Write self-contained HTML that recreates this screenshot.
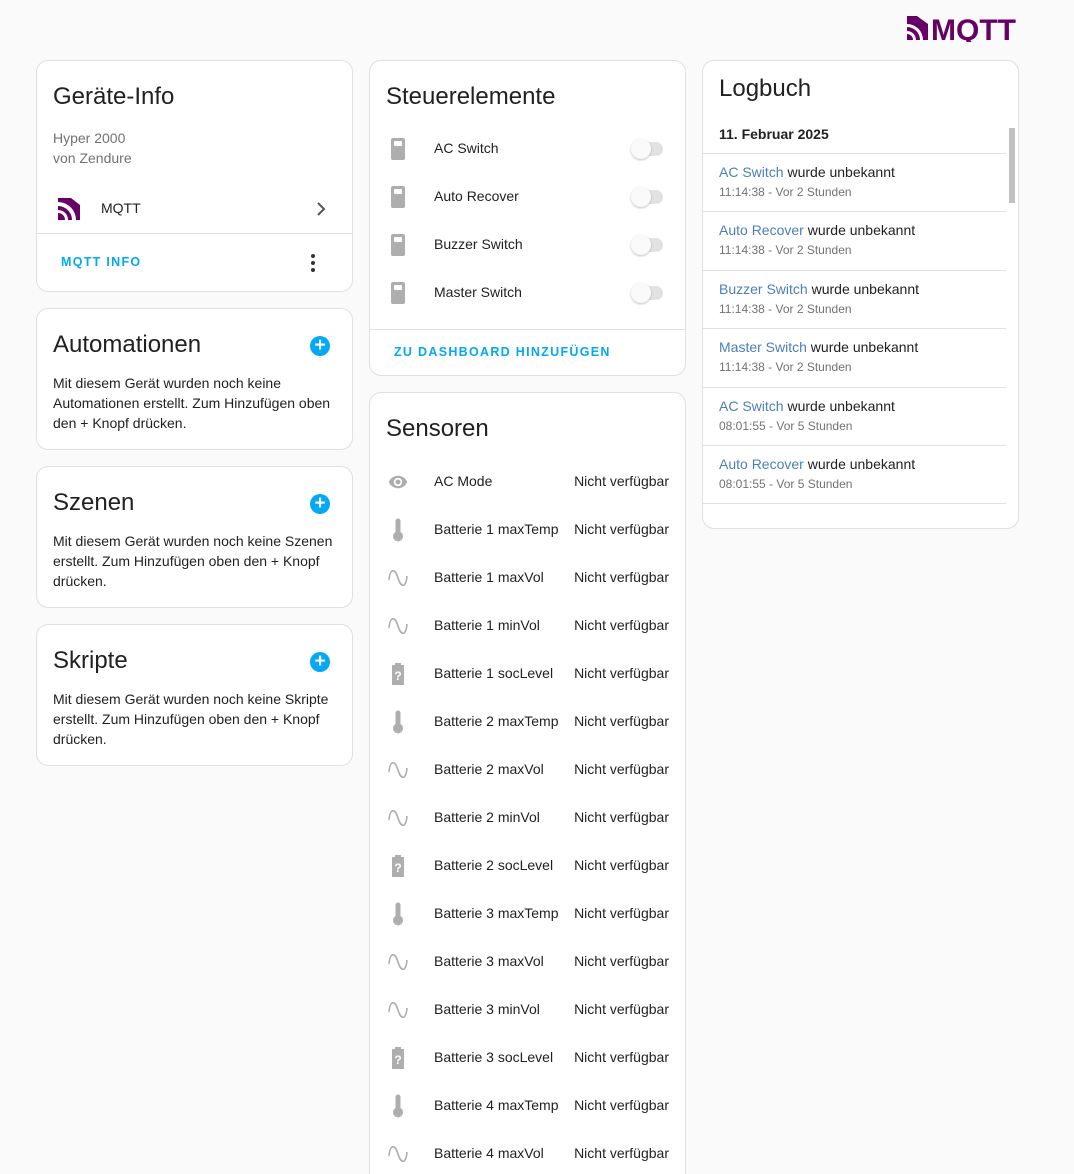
<!DOCTYPE html>
<html><head><meta charset="utf-8"><style>
*{box-sizing:border-box;margin:0;padding:0}
html{overflow:hidden;height:1174px}
body{width:1074px;height:1174px;overflow:hidden;background:#fafafa;font-family:"Liberation Sans",sans-serif;color:#212121;position:relative}
.card{position:absolute;background:#fff;border:1px solid #e0e0e0;border-radius:12px;overflow:hidden}
.abs{position:absolute}
.t{font-size:24px;color:#212121;position:absolute;left:16px}
.p{font-size:14px;line-height:20px;position:absolute;left:16px;right:16px;color:#212121}
.btn{color:#03a9f4;font-size:12.5px;font-weight:bold;letter-spacing:1.3px;position:absolute}
.plus{position:absolute;width:20px;height:20px;border-radius:50%;background:#03a9f4;color:#fff;font-size:19px;line-height:19px;text-align:center;font-weight:bold}
.row{position:absolute;left:0;right:0;height:48px;font-size:14px}
.row .n{position:absolute;left:64px;top:15px}
.row .v{position:absolute;right:16px;top:15px}
.tg{position:absolute;right:22px;top:17px;width:28px;height:14px;border-radius:7px;background:#e2e2e2}
.tg:before{content:"";position:absolute;left:-4px;top:-3px;width:20px;height:20px;border-radius:50%;background:#fafafa;box-shadow:0 1px 2px rgba(0,0,0,.25)}
.sw{position:absolute;left:21px;top:13px;width:14px;height:22px;border-radius:2px;background:#aeaeae}
.sw:before{content:"";position:absolute;left:3px;top:3px;width:8px;height:5px;background:#fff;border-radius:1px}
.le{position:absolute;left:0;right:12px;height:58px;border-top:1px solid #e0e0e0;font-size:14px}
.le .a{position:absolute;left:16px;top:10px}
.le .a span{color:#4b7fb8}
.le .b{position:absolute;left:16px;top:31px;font-size:12px;color:#727272}
</style></head><body>

<svg class="abs" style="left:906px;top:12px" width="112" height="30" viewBox="0 0 112 30">
<path d="M1 4h10l11 8v16h-5A16 16 0 0 0 1 12z M1 15a13 13 0 0 1 13 13h-4a9 9 0 0 0-9-9z M1 22a6 6 0 0 1 6 6H1z" fill="#660066"/>
<text x="25" y="28" font-family="Liberation Sans" font-weight="bold" font-size="30" fill="#660066" textLength="85" lengthAdjust="spacingAndGlyphs">MQTT</text>
</svg>

<!-- col1 -->
<div class="card" style="left:36px;top:60px;width:317px;height:232px">
 <div class="t" style="top:22px">Geräte-Info</div>
 <div class="p" style="top:67px;color:#727272">Hyper 2000<br>von Zendure</div>
 <svg class="abs" style="left:20px;top:136px" width="24" height="24" viewBox="0 0 24 24"><path d="M1 1h13l9 7v15h-4A18 18 0 0 0 1 5z M1 9a14 14 0 0 1 14 14h-4A10 10 0 0 0 1 13z M1 16a7 7 0 0 1 7 7H1z" fill="#660066"/></svg>
 <div class="abs" style="left:64px;top:139px;font-size:14px">MQTT</div>
 <svg class="abs" style="left:276px;top:140px" width="16" height="16" viewBox="0 0 16 16"><path d="M5 2l6 6-6 6" stroke="#555" stroke-width="2" fill="none"/></svg>
 <div class="abs" style="left:0;right:0;top:172px;border-top:1px solid #e0e0e0"></div>
 <div class="btn" style="left:24px;top:194px">MQTT INFO</div>
 <svg class="abs" style="left:271px;top:192px" width="10" height="20"><circle cx="5" cy="3" r="2" fill="#333"/><circle cx="5" cy="10" r="2" fill="#333"/><circle cx="5" cy="17" r="2" fill="#333"/></svg>
</div>

<div class="card" style="left:36px;top:308px;width:317px;height:142px">
 <div class="t" style="top:22px">Automationen</div><div class="plus" style="left:273px;top:27px">+</div>
 <div class="p" style="top:64px">Mit diesem Gerät wurden noch keine Automationen erstellt. Zum Hinzufügen oben den + Knopf drücken.</div>
</div>
<div class="card" style="left:36px;top:466px;width:317px;height:142px">
 <div class="t" style="top:22px">Szenen</div><div class="plus" style="left:273px;top:27px">+</div>
 <div class="p" style="top:64px">Mit diesem Gerät wurden noch keine Szenen erstellt. Zum Hinzufügen oben den + Knopf drücken.</div>
</div>
<div class="card" style="left:36px;top:624px;width:317px;height:142px">
 <div class="t" style="top:22px">Skripte</div><div class="plus" style="left:273px;top:27px">+</div>
 <div class="p" style="top:64px">Mit diesem Gerät wurden noch keine Skripte erstellt. Zum Hinzufügen oben den + Knopf drücken.</div>
</div>

<!-- col2 -->
<div class="card" style="left:369px;top:60px;width:317px;height:316px">
 <div class="t" style="top:22px">Steuerelemente</div>
 <div class="row" style="top:64px"><div class="sw"></div><div class="n">AC Switch</div><div class="tg"></div></div>
 <div class="row" style="top:112px"><div class="sw"></div><div class="n">Auto Recover</div><div class="tg"></div></div>
 <div class="row" style="top:160px"><div class="sw"></div><div class="n">Buzzer Switch</div><div class="tg"></div></div>
 <div class="row" style="top:208px"><div class="sw"></div><div class="n">Master Switch</div><div class="tg"></div></div>
 <div class="abs" style="left:0;right:0;top:268px;border-top:1px solid #e0e0e0"></div>
 <div class="btn" style="left:24px;top:284px">ZU DASHBOARD HINZUFÜGEN</div>
</div>

<div class="card" style="left:369px;top:392px;width:317px;height:800px">
 <div class="t" style="top:22px">Sensoren</div>
 <div id="sens"></div>
</div>

<!-- col3 -->
<div class="card" style="left:702px;top:60px;width:317px;height:469px">
 <div class="t" style="top:14px">Logbuch</div>
 <div class="abs" style="left:16px;top:65px;font-size:14px;font-weight:bold">11. Februar 2025</div>
 <div class="abs" style="right:3px;top:67px;width:6px;height:75px;background:#c1c1c1"></div>
 <div class="le" style="top:92px"><div class="a"><span>AC Switch</span> wurde unbekannt</div><div class="b">11:14:38 - Vor 2 Stunden</div></div>
 <div class="le" style="top:150px"><div class="a"><span>Auto Recover</span> wurde unbekannt</div><div class="b">11:14:38 - Vor 2 Stunden</div></div>
 <div class="le" style="top:209px"><div class="a"><span>Buzzer Switch</span> wurde unbekannt</div><div class="b">11:14:38 - Vor 2 Stunden</div></div>
 <div class="le" style="top:267px"><div class="a"><span>Master Switch</span> wurde unbekannt</div><div class="b">11:14:38 - Vor 2 Stunden</div></div>
 <div class="le" style="top:326px"><div class="a"><span>AC Switch</span> wurde unbekannt</div><div class="b">08:01:55 - Vor 5 Stunden</div></div>
 <div class="le" style="top:384px"><div class="a"><span>Auto Recover</span> wurde unbekannt</div><div class="b">08:01:55 - Vor 5 Stunden</div></div>
 <div class="le" style="top:442px;height:14px;overflow:hidden"><div class="a" style="top:10px"><span>Buzzer Switch</span> wurde unbekannt</div></div>
</div>

<script>
var eye='<svg class="abs" style="left:17px;top:14px" width="22" height="20" viewBox="0 0 24 24"><path d="M12 4.5C7 4.5 2.7 7.6 1 12c1.7 4.4 6 7.5 11 7.5s9.3-3.1 11-7.5c-1.7-4.4-6-7.5-11-7.5zM12 17a5 5 0 1 1 0-10 5 5 0 0 1 0 10zm0-8a3 3 0 1 0 0 6 3 3 0 0 0 0-6z" fill="#aeaeae"/></svg>';
var th='<svg class="abs" style="left:20px;top:12px" width="16" height="24" viewBox="0 0 16 24"><path d="M5.5 3a2.5 2.5 0 0 1 5 0v11a5 5 0 1 1-5 0z" fill="#aeaeae"/></svg>';
var sn='<svg class="abs" style="left:17px;top:12px" width="22" height="24" viewBox="0 0 22 24"><path d="M2 14C3 2 8 2 11 12s8 10 9 -2" stroke="#aeaeae" stroke-width="1.6" fill="none"/></svg>';
var bt='<svg class="abs" style="left:21px;top:13px" width="14" height="22" viewBox="0 0 14 22"><path d="M4 0h6v2h3v20H1V2h3z" fill="#aeaeae"/><text x="7" y="17" text-anchor="middle" font-family="Liberation Sans" font-weight="bold" font-size="12" fill="#fff">?</text></svg>';
var r=[[eye,"AC Mode"]];
for(var i=1;i<=4;i++){r.push([th,"Batterie "+i+" maxTemp"],[sn,"Batterie "+i+" maxVol"],[sn,"Batterie "+i+" minVol"],[bt,"Batterie "+i+" socLevel"]);}
var h="";for(var j=0;j<r.length;j++){h+='<div class="row" style="top:'+(65+48*j)+'px">'+r[j][0]+'<div class="n">'+r[j][1]+'</div><div class="v">Nicht verfügbar</div></div>';}
document.getElementById("sens").innerHTML=h;
</script>
</body></html>
